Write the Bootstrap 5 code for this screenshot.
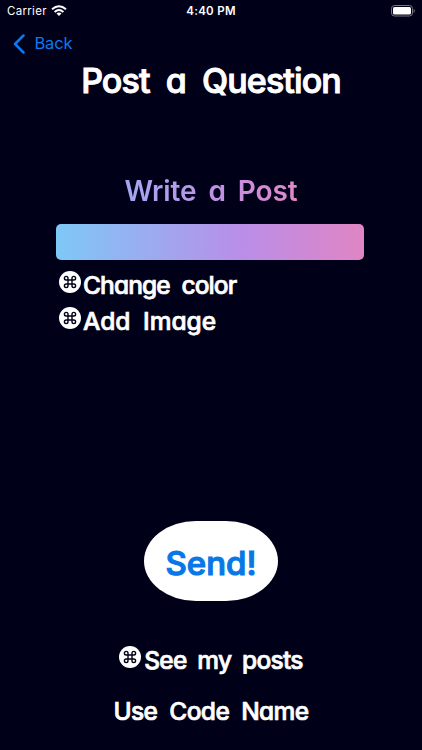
<!DOCTYPE html>
<html lang="en">
<head>
<meta charset="utf-8">
<meta name="viewport" content="width=device-width, initial-scale=1">
<title>Post a Question</title>
<link href="https://cdn.jsdelivr.net/npm/bootstrap@5.3.0/dist/css/bootstrap.min.css" rel="stylesheet">
<style>
body{background:#000019;color:#fff;height:750px;overflow:hidden;font-family:"Chalkboard SE","Inter",sans-serif}
.status,.back{font-family:"Inter",sans-serif}
.status{height:22px;font-size:11.5px;line-height:22px;padding:0 7px;letter-spacing:.3px}
.status>*{flex:1 1 0}
.time{font-weight:600;font-size:11.5px}
.back{height:39px;padding:4px 0 0 13px;color:#0b7af0;font-size:16.5px;letter-spacing:-.1px}
.hand{font-feature-settings:"cv11" 1;font-weight:500;white-space:nowrap;-webkit-text-stroke:.7px currentColor}
.screen-title{font-size:34px;line-height:40px;letter-spacing:-.9px;word-spacing:8px;-webkit-text-stroke-width:1px}
.grad{background:linear-gradient(90deg,#7ec8f7,#b98ee8 60%,#e085c4)}
.write{background:linear-gradient(90deg,#a3a7f3,#c48fe2 60%,#e088c6);font-size:28px;line-height:34px;letter-spacing:-.1px;word-spacing:5px;margin-top:73px;background-clip:text;-webkit-background-clip:text;color:transparent;font-weight:600;-webkit-text-stroke:0}
.field{width:308px;height:36px;border-radius:5px;margin-top:16px;margin-right:2px}
.tools{width:308px;margin-top:7px;padding-left:2px}
.action{font-size:24.5px;line-height:36px;letter-spacing:-.9px;word-spacing:6px}
.action svg{margin-bottom:6px;margin-right:2px}
.add{letter-spacing:0}
.send{width:134px;height:80px;border-radius:52px/40px;margin-top:182px;background:#fff;color:#0878e6;font-size:33px;letter-spacing:0;padding-top:6px;-webkit-text-stroke-width:1.2px}
.posts{margin-top:41px;letter-spacing:-.75px;word-spacing:5px}
.posts svg{margin-right:3px}
.code{margin-top:15px;letter-spacing:-.6px}
</style>
</head>
<body class="d-flex flex-column">
<svg class="d-none"><symbol id="cmd" viewBox="0 0 22 22"><circle cx="11" cy="11" r="11" fill="#fff"/><path d="M9 9V7.200A1.800 1.800 0 1 0 7.200 9H14.800A1.800 1.800 0 1 0 13 7.200V14.800A1.800 1.800 0 1 0 14.800 13H7.200A1.800 1.800 0 1 0 9 14.800Z" fill="none" stroke="#000019" stroke-width="1.400"/></symbol></svg>
<header>
<div class="status d-flex align-items-center">
<span class="d-flex align-items-center">Carrier<svg class="ms-1" width="16" height="12" viewBox="0 0 16 12" fill="none" stroke="#fff" stroke-width="2"><path d="M1 4.300Q8-1.900 15 4.300M3.600 6.900Q8 3.100 12.400 6.900"/><path d="M5.500 8.500Q8 6.500 10.500 8.500L8 11Z" fill="#fff" stroke="none"/></svg></span>
<span class="time text-center">4:40 PM</span>
<span class="d-flex justify-content-end"><svg width="25" height="12" viewBox="0 0 25 12"><rect x="1.500" y=".5" width="21" height="10.500" rx="3" fill="none" stroke="#777783"/><rect x="3" y="2" width="18" height="7.500" rx="1.500" fill="#fff"/><path d="M23.600 4v4q1.200-.6 1.200-2t-1.200-2" fill="#777783"/></svg></span>
</div>
<nav class="back d-flex align-items-center"><svg width="12" height="20" viewBox="0 0 12 20" fill="none" stroke="currentColor" stroke-width="2.500" stroke-linecap="round" stroke-linejoin="round"><path d="M10.500 1.500 2 10l8.500 8.500"/></svg><span class="ms-2 text-nowrap">&#8202;Back</span></nav>
</header>
<main class="d-flex flex-column align-items-center">
<h1 class="hand screen-title m-0">Post a Question</h1>
<h2 class="hand write mb-0">Write a Post</h2>
<div class="grad field"></div>
<div class="tools">
<div class="hand action d-flex align-items-center"><svg width="22" height="22"><use href="#cmd"/></svg><span>Change color</span></div>
<div class="hand action add d-flex align-items-center"><svg width="22" height="22"><use href="#cmd"/></svg><span>Add Image</span></div>
</div>
<div class="hand send d-flex align-items-center justify-content-center" role="button">Send!</div>
<div class="hand action posts d-flex align-items-center"><svg width="22" height="22"><use href="#cmd"/></svg><span>See my posts</span></div>
<div class="hand action code">Use Code Name</div>
</main>
<script src="https://cdn.jsdelivr.net/npm/bootstrap@5.3.0/dist/js/bootstrap.bundle.min.js"></script>
</body>
</html>
